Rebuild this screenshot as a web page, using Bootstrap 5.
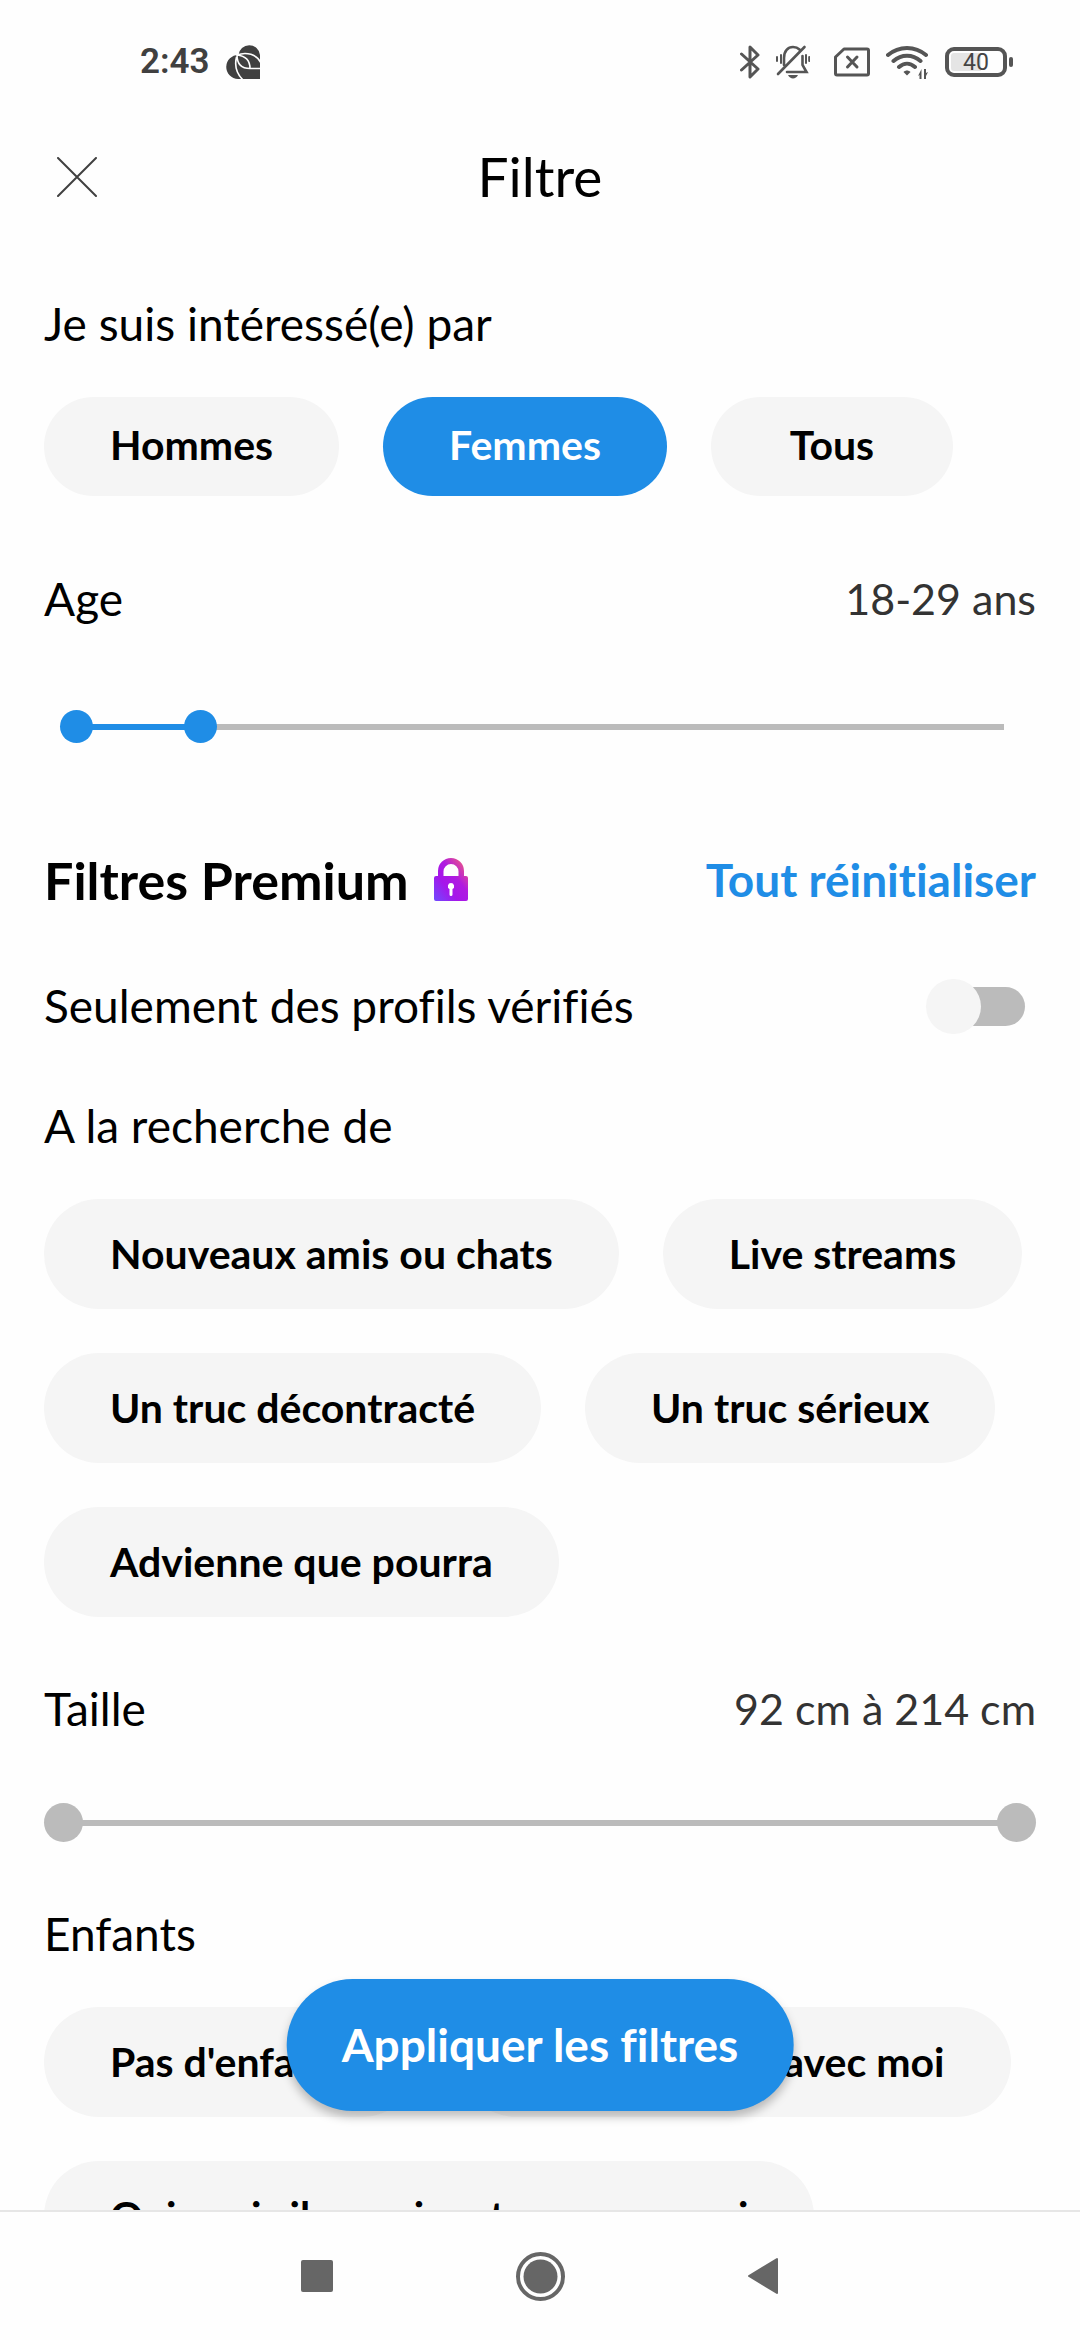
<!DOCTYPE html>
<html lang="fr">
<head>
<meta charset="utf-8">
<meta name="viewport" content="width=device-width, initial-scale=1">
<title>Filtre</title>
<link href="https://cdn.jsdelivr.net/npm/bootstrap@5.3.0/dist/css/bootstrap.min.css" rel="stylesheet">
<style>
  :root { --brand: #1f8de6; --soft: #f5f5f5; --track: #bbb; }
  body { font-family: Lato, "Open Sans", sans-serif; font-size: 46px; line-height: 54px; font-variant-ligatures: none; color: #000; background: #fefefe; }
  .btn { font-variant-ligatures: none; }

  /* system status bar */
  .sysbar { height: 124px; padding: 0 67px 0 140px; color: #404040; font-family: Roboto, sans-serif; }
  .sysbar-time { font-size: 35px; font-weight: 600; }
  .sysbar svg { display: block; flex: none; }
  .sys-icons { gap: 16px; }
  .battery { width: 62px; height: 30px; border: 4px solid #555; border-radius: 9px; padding: 2px; }
  .battery-level { background: linear-gradient(90deg, #e5e5e5 60%, transparent 60%); height: 18px; font-size: 23px; line-height: 20px; color: #444; border-radius: 3px; }
  .battery-nub { width: 4px; height: 10px; margin-left: 2px; border-radius: 2px; background: #555; }

  /* app header */
  .topbar { height: 106px; padding: 0 44px; }
  .topbar h1 { font-size: 55px; line-height: 64px; font-weight: 400; padding-bottom: 2px; }
  .btn-icon { width: 66px; height: 66px; padding: 0 0 0 13px; border: 0; }
  .btn-icon svg, .sysnav svg, .lock { display: block; }

  /* filter form */
  .filters { padding: 67px 44px 0; min-height: 0; }
  .filters h2 { font-size: 46px; line-height: 54px; font-weight: 400; }
  .filters h2.premium { font-size: 52px; font-weight: 700; }
  .reading { font-size: 43px; color: #333; }
  .reset { color: var(--brand); font-weight: 700; text-decoration: none; }
  .chips { gap: 44px; margin-top: 46px; }
  .chip { --bs-btn-bg: var(--soft); --bs-btn-color: #000; --bs-btn-border-width: 0; --bs-btn-border-radius: 55px;
    --bs-btn-active-bg: var(--brand); --bs-btn-active-color: #fff; --bs-btn-font-size: 41px; --bs-btn-line-height: 52px; --bs-btn-font-weight: 700;
    padding: 29px 66px; white-space: nowrap; }
  .chips-short .chip { padding-top: 22px; padding-bottom: 25px; min-width: 242px; }

  /* two thumbs on one track */
  .duo { position: relative; display: flex; align-items: center; --thumb: 33px; --dot: var(--brand); height: var(--thumb); }
  .duo-rail { flex: 1; height: 6px; margin: 0 calc(var(--thumb) / 2); background: var(--track); }
  .duo-span { height: 6px; background: var(--brand); }
  .duo .form-range { position: absolute; inset: 0; height: 100%; pointer-events: none; }
  .duo .form-range::-webkit-slider-runnable-track { height: 100%; background: none; }
  .duo .form-range::-webkit-slider-thumb { width: var(--thumb); height: var(--thumb); margin: 0; border-radius: 50%; background: var(--dot); pointer-events: auto; }
  .duo-age { margin: 84px 16px 0; }
  .duo-height { margin-top: 67px; --thumb: 39px; --dot: var(--track); }

  /* toggle */
  .toggle { position: relative; appearance: none; width: 99px; height: 55px; margin: 0 11px 0 0; }
  .toggle::before { content: ""; position: absolute; inset: 8px 0 8px 10px; border-radius: 20px; background: var(--track); }
  .toggle::after { content: ""; position: absolute; left: 0; top: 0; width: 55px; height: 55px; border-radius: 50%; background: var(--soft); }
  .toggle:checked::before { background: var(--brand); }
  .toggle:checked::after { left: 44px; }

  .mt-a { margin-top: 76px; }
  .mt-b { margin-top: 110px; }
  .mt-c { margin-top: 72px; }
  .mt-d { margin-top: 65px; }

  .apply { position: absolute; left: 50%; bottom: 99px; transform: translateX(-50%); z-index: 2; white-space: nowrap;
    --bs-btn-bg: var(--brand); --bs-btn-color: #fff; --bs-btn-border-width: 0; --bs-btn-border-radius: 66px;
    --bs-btn-padding-x: 55px; --bs-btn-padding-y: 40px; --bs-btn-font-size: 46px; --bs-btn-line-height: 52px; --bs-btn-font-weight: 700;
    box-shadow: 0 6px 10px rgba(0, 0, 0, .25); }

  .sysnav { height: 130px; border-top: 2px solid #e6e6e6; background: #fefefe; flex: none; gap: 174px; }
  .sysnav .btn { --bs-btn-padding-x: 0; --bs-btn-padding-y: 0; --bs-btn-border-width: 0; width: 49px; display: flex; justify-content: center; }
</style>
</head>
<body>
<div class="d-flex flex-column vh-100 overflow-hidden">

  <div class="sysbar d-flex align-items-center flex-shrink-0">
    <span class="sysbar-time">2:43</span>
    <svg class="ms-3" width="36" height="36" viewBox="0 0 36 36" aria-hidden="true">
      <path fill="#404040" d="M12.500 11a10.800 10.800 0 0 1 21.500 0v24H12A12 12 0 1 1 12.500 11z"/>
      <path fill="none" stroke="#fefefe" stroke-width="1.600" d="M11 11C20 7.500 31 10 35 19M11 11c9 1 13 6 13 13.500M11 11c0 9 4 13.500 13 13.500H35M10.500 13C8 23 12 31 17 36"/>
    </svg>
    <div class="sys-icons ms-auto d-flex align-items-center">
      <svg width="20" height="36" viewBox="0 0 20 36" fill="none" stroke="#555" stroke-width="3" stroke-linejoin="round" stroke-linecap="round" aria-label="Bluetooth"><path d="M1.500 10 18 25l-8 8V3l8 8L1.500 26"/></svg>
      <svg class="me-2" width="34" height="34" viewBox="0 0 34 34" fill="none" stroke="#555" stroke-width="2.600" stroke-linecap="round" aria-label="Vibreur"><path d="M8 20v-7C8 6 12 2 17 2c3 0 5 1 6.500 2.500M26.500 11v9l4 7H11M28.500 2 2 29"/><path stroke-width="2" d="M1 12v4M5 10v8M30 10v8M33.200 12v4"/><path fill="#555" stroke="none" d="M12 30h10c-2 4.500-8 4.500-10 0z"/></svg>
      <svg width="36" height="30" viewBox="0 0 36 30" fill="none" stroke="#555" stroke-width="3" stroke-linejoin="round" stroke-linecap="round" aria-label="Pas de carte SIM"><path d="M10 2h23q1.500 0 1.500 1.500v23q0 1.500-1.500 1.500H3q-1.500 0-1.500-1.500V10z"/><path d="m13.500 10 9.500 10M23 10l-9.500 10"/></svg>
      <svg width="43" height="34" viewBox="0 0 43 34" fill="none" stroke="#555" stroke-width="4" stroke-linecap="round" aria-label="Wi-Fi"><path d="M2 10C13 .500 29 .500 40 10M7.500 16c8-7 19-7 27 0M13 22c5-4.500 11-4.500 16 0"/><path fill="#555" stroke="none" d="M17.500 27c2-2 5-2 7 0L21 30.500zM35.500 24v10h-2v-4L32 31zM38 34V24h2v4l2-1-2 4v3z"/></svg>
      <div class="d-flex align-items-center">
        <div class="battery"><div class="battery-level text-center">40</div></div>
        <span class="battery-nub"></span>
      </div>
    </div>
  </div>

  <header class="topbar d-flex align-items-center justify-content-between flex-shrink-0">
    <button type="button" class="btn btn-icon" aria-label="Fermer">
      <svg width="40" height="40" viewBox="0 0 40 40" stroke="#404040" stroke-width="2" stroke-linecap="round"><path d="m1 1 38 38M39 1 1 39"/></svg>
    </button>
    <h1 class="m-0">Filtre</h1>
    <span class="btn-icon"></span>
  </header>

  <div class="flex-grow-1 position-relative" style="min-height:0">
    <form class="filters h-100 overflow-hidden" id="filters">
      <h2 class="m-0" id="who">Je suis intéressé(e) par</h2>
      <div class="chips chips-short d-flex" role="group" aria-labelledby="who">
        <input class="btn-check" type="radio" name="who" id="w1"><label class="btn chip" for="w1">Hommes</label>
        <input class="btn-check" type="radio" name="who" id="w2" checked><label class="btn chip" for="w2">Femmes</label>
        <input class="btn-check" type="radio" name="who" id="w3"><label class="btn chip" for="w3">Tous</label>
      </div>

      <div class="d-flex justify-content-between mt-a">
        <h2 class="m-0">Age</h2><span class="reading">18-29 ans</span>
      </div>
      <div class="duo duo-age">
        <div class="duo-rail"><div class="duo-span" style="width:13.4%"></div></div>
        <input class="form-range" type="range" min="18" max="100" value="18" aria-label="Age minimum">
        <input class="form-range" type="range" min="18" max="100" value="29" aria-label="Age maximum">
      </div>

      <div class="d-flex align-items-center mt-b">
        <h2 class="premium m-0">Filtres Premium</h2>
        <svg class="lock ms-4" width="36" height="44" viewBox="0 0 36 44" aria-hidden="true">
          <defs><linearGradient id="lg" x1="0" y1="1" x2="1" y2="0"><stop offset="0" stop-color="#6f4bff"/><stop offset=".35" stop-color="#a516ea"/><stop offset=".6" stop-color="#b01be0"/><stop offset="1" stop-color="#ff6a6a"/></linearGradient></defs>
          <path fill="url(#lg)" fill-rule="evenodd" d="M5 18v-5a13 13 0 0 1 26 0v5h2q2 0 2 2v21q0 2-2 2H3q-2 0-2-2V20q0-2 2-2zm5.500 0h15v-4.500a7.500 7.500 0 0 0-15 0z"/>
          <path fill="#fff" d="M18 25a3.200 3.200 0 0 1 1.500 6v5.500a1.500 1.500 0 0 1-3 0V31a3.200 3.200 0 0 1 1.500-6z"/>
        </svg>
        <a class="reset ms-auto" href="#">Tout réinitialiser</a>
      </div>

      <div class="d-flex align-items-start justify-content-between mt-c">
        <label for="verified">Seulement des profils vérifiés</label>
        <input class="toggle" type="checkbox" role="switch" id="verified">
      </div>

      <h2 class="mb-0 mt-d" id="goal">A la recherche de</h2>
      <div class="chips d-flex flex-wrap" role="group" aria-labelledby="goal">
        <div><input class="btn-check" type="checkbox" id="g1"><label class="btn chip" for="g1">Nouveaux amis ou chats</label></div>
        <div><input class="btn-check" type="checkbox" id="g2"><label class="btn chip" for="g2">Live streams</label></div>
        <div><input class="btn-check" type="checkbox" id="g3"><label class="btn chip" for="g3">Un truc décontracté</label></div>
        <div><input class="btn-check" type="checkbox" id="g4"><label class="btn chip" for="g4">Un truc sérieux</label></div>
        <div><input class="btn-check" type="checkbox" id="g5"><label class="btn chip" for="g5">Advienne que pourra</label></div>
      </div>

      <div class="d-flex justify-content-between mt-d">
        <h2 class="m-0">Taille</h2><span class="reading">92 cm à 214 cm</span>
      </div>
      <div class="duo duo-height">
        <div class="duo-rail"></div>
        <input class="form-range" type="range" min="92" max="214" value="92" aria-label="Taille minimum">
        <input class="form-range" type="range" min="92" max="214" value="214" aria-label="Taille maximum">
      </div>

      <h2 class="mb-0 mt-d" id="kids">Enfants</h2>
      <div class="chips d-flex flex-wrap" role="group" aria-labelledby="kids">
        <div><input class="btn-check" type="checkbox" id="k1"><label class="btn chip" for="k1">Pas d'enfants</label></div>
        <div><input class="btn-check" type="checkbox" id="k2"><label class="btn chip" for="k2">Oui, ils vivent avec moi</label></div>
        <div><input class="btn-check" type="checkbox" id="k3"><label class="btn chip" for="k3">Oui, mais ils ne vivent pas avec moi</label></div>
      </div>
    </form>
    <button type="submit" form="filters" class="btn apply">Appliquer les filtres</button>
  </div>

  <nav class="sysnav d-flex align-items-center justify-content-center" aria-label="Navigation système">
    <button type="button" class="btn" aria-label="Récents"><svg width="32" height="32"><rect width="32" height="32" rx="2" fill="#666"/></svg></button>
    <button type="button" class="btn" aria-label="Accueil"><svg width="49" height="49" viewBox="0 0 49 49"><circle cx="24.500" cy="24.500" r="22.500" fill="none" stroke="#666" stroke-width="4"/><circle cx="24.500" cy="24.500" r="17" fill="#666"/></svg></button>
    <button type="button" class="btn" aria-label="Retour"><svg width="32" height="38" viewBox="0 0 32 38"><path fill="#666" stroke="#666" stroke-width="2" stroke-linejoin="round" d="M30 2v34L2 19z"/></svg></button>
  </nav>
</div>
<script src="https://cdn.jsdelivr.net/npm/bootstrap@5.3.0/dist/js/bootstrap.bundle.min.js"></script>
</body>
</html>
